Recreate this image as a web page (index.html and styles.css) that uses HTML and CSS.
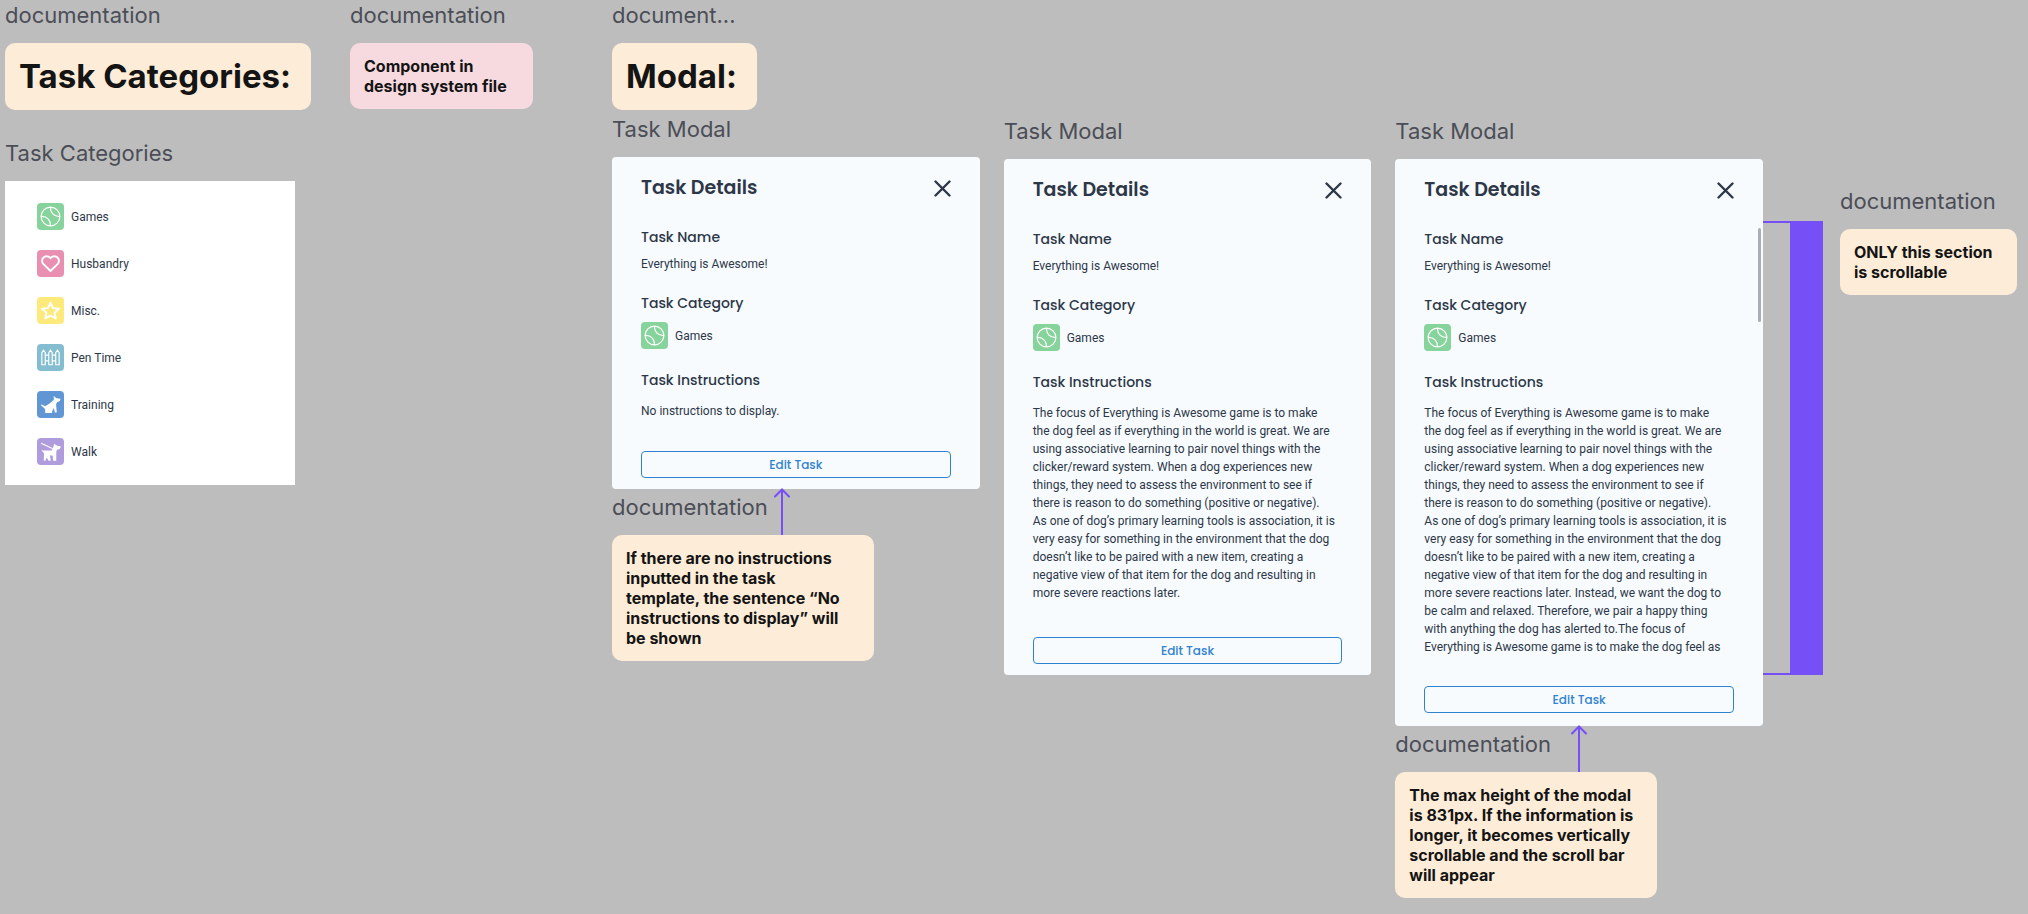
FILE: index.html
```html
<!DOCTYPE html>
<html lang="en">
<head>
  <meta charset="UTF-8">
  <title>Task Modal</title>
  <link rel="stylesheet" href="styles.css">
</head>
<body>

  <svg class="sprite">
    <symbol id="ball" viewBox="0 0 28 28">
      <g fill="none" stroke="#fff" stroke-width="1.3">
        <circle cx="14" cy="14" r="9.7"/>
        <path d="M14 4.3c-.3 5.6 3.200 9.900 9.700 9.700M4.300 14c6.500-.2 10 4.100 9.700 9.700"/>
      </g>
    </symbol>
  </svg>

  <main class="board">
    <section class="categories">
      <p class="label">documentation</p>
      <h1 class="note title">Task Categories:</h1>
      <p class="label spaced">Task Categories</p>
      <ul class="category_list">
        <li class="category">
          <svg class="icon green"><use href="#ball"/></svg>
          <span>Games</span>
        </li>
        <li class="category">
          <svg class="icon pink" viewBox="0 0 28 28">
            <path d="M14 21.800l-7.300-7.200a4.700 4.700 0 0 1 0-6.800 4.700 4.700 0 0 1 6.700 0l.6.700.6-.7a4.700 4.700 0 0 1 6.700 0 4.700 4.700 0 0 1 0 6.800z" fill="none" stroke="#fff" stroke-width="2" stroke-linejoin="round"/>
          </svg>
          <span>Husbandry</span>
        </li>
        <li class="category">
          <svg class="icon yellow" viewBox="0 0 28 28">
            <path d="M14 6l2.600 5.500 6.200.7-4.600 4.100 1.300 6L14 19.300l-5.500 3 1.300-6-4.600-4.100 6.200-.7z" fill="none" stroke="#fff" stroke-width="2" stroke-linejoin="round"/>
          </svg>
          <span>Misc.</span>
        </li>
        <li class="category">
          <svg class="icon teal" viewBox="0 0 28 28">
            <path d="M5 21.500V9l1.800-2.500L8.600 9v12.500zM12.200 21.500V9L14 6.500 15.800 9v12.500zM19.400 21.500V9l1.800-2.500L23 9v12.500zM8.600 11.500h3.600M8.600 17.500h3.600M15.800 11.500h3.600M15.800 17.500h3.600" fill="none" stroke="#fff" stroke-width="1.200"/>
          </svg>
          <span>Pen Time</span>
        </li>
        <li class="category">
          <svg class="icon blue" viewBox="0 0 28 28">
            <path d="M17.300 5.300l3 2.300 4 .4c0 2-1 3.200-3.200 3.200l-1.300 2.500.7 8.500h-2l-1-4.500-1.700 3-.2 2H8.500v-2.500l-.6-2-3.900-3.500.8-.8 3.700 2 4.500-2.900 4.500-3.800z" fill="#fff"/>
          </svg>
          <span>Training</span>
        </li>
        <li class="category">
          <svg class="icon purple" viewBox="0 0 28 28">
            <path d="M4.300 5.500L16.500 11.200" stroke="#fff" stroke-width="1.200"/>
            <path d="M17.800 6l3 2 3.700.5c0 2.300-1.300 3.800-3.500 3.500l-1 2v9.500h-3.200l-.5-5-3-.5 1 5.500h-2.200l-2-3-1.500 3H7l.3-7.500-2.800-3.500L6.300 13h9l1.200-2z" fill="#fff"/>
          </svg>
          <span>Walk</span>
        </li>
      </ul>
    </section>

    <section class="design_system">
      <p class="label">documentation</p>
      <p class="note note_pink">Component in design system file</p>
    </section>

    <section class="modals">
      <p class="label">document...</p>
      <h1 class="note title">Modal:</h1>

      <div class="modal_row">
        <div class="frame">
          <p class="label">Task Modal</p>
          <article class="modal">
            <header class="modal_header">
              <h2>Task Details</h2>
              <button class="close" aria-label="Close">
                <svg viewBox="0 0 17 17"><path d="M1.500 1.500l14 14M15.500 1.500l-14 14"/></svg>
              </button>
            </header>
            <div class="modal_body">
              <h3>Task Name</h3>
              <p>Everything is Awesome!</p>
              <h3>Task Category</h3>
              <div class="category">
                <svg class="icon green"><use href="#ball"/></svg>
                <span>Games</span>
              </div>
              <h3>Task Instructions</h3>
              <p class="instructions">No instructions to display.</p>
            </div>
            <button class="edit">Edit Task</button>
          </article>
          <div class="remark">
            <p class="label">documentation</p>
            <svg class="arrow" viewBox="0 0 16 47"><path d="M8 47V1.500M1 8.500l7-7 7 7"/></svg>
            <p class="note">If there are no instructions<br>inputted in the task<br>template, the sentence “No<br>instructions to display” will<br>be shown</p>
          </div>
        </div>

        <div class="frame frame_low">
          <p class="label">Task Modal</p>
          <article class="modal modal_medium">
            <header class="modal_header">
              <h2>Task Details</h2>
              <button class="close" aria-label="Close">
                <svg viewBox="0 0 17 17"><path d="M1.500 1.500l14 14M15.500 1.500l-14 14"/></svg>
              </button>
            </header>
            <div class="modal_body">
              <h3>Task Name</h3>
              <p>Everything is Awesome!</p>
              <h3>Task Category</h3>
              <div class="category">
                <svg class="icon green"><use href="#ball"/></svg>
                <span>Games</span>
              </div>
              <h3>Task Instructions</h3>
              <p class="instructions">
                The focus of Everything is Awesome game is to make<br>
                the dog feel as if everything in the world is great. We are<br>
                using associative learning to pair novel things with the<br>
                clicker/reward system. When a dog experiences new<br>
                things, they need to assess the environment to see if<br>
                there is reason to do something (positive or negative).<br>
                As one of dog’s primary learning tools is association, it is<br>
                very easy for something in the environment that the dog<br>
                doesn’t like to be paired with a new item, creating a<br>
                negative view of that item for the dog and resulting in<br>
                more severe reactions later.
              </p>
            </div>
            <button class="edit">Edit Task</button>
          </article>
        </div>

        <div class="frame frame_low">
          <p class="label">Task Modal</p>
          <article class="modal modal_max">
            <header class="modal_header">
              <h2>Task Details</h2>
              <button class="close" aria-label="Close">
                <svg viewBox="0 0 17 17"><path d="M1.500 1.500l14 14M15.500 1.500l-14 14"/></svg>
              </button>
            </header>
            <div class="modal_body">
              <h3>Task Name</h3>
              <p>Everything is Awesome!</p>
              <h3>Task Category</h3>
              <div class="category">
                <svg class="icon green"><use href="#ball"/></svg>
                <span>Games</span>
              </div>
              <h3>Task Instructions</h3>
              <p class="instructions">
                The focus of Everything is Awesome game is to make<br>
                the dog feel as if everything in the world is great. We are<br>
                using associative learning to pair novel things with the<br>
                clicker/reward system. When a dog experiences new<br>
                things, they need to assess the environment to see if<br>
                there is reason to do something (positive or negative).<br>
                As one of dog’s primary learning tools is association, it is<br>
                very easy for something in the environment that the dog<br>
                doesn’t like to be paired with a new item, creating a<br>
                negative view of that item for the dog and resulting in<br>
                more severe reactions later. Instead, we want the dog to<br>
                be calm and relaxed. Therefore, we pair a happy thing<br>
                with anything the dog has alerted to.The focus of<br>
                Everything is Awesome game is to make the dog feel as
              </p>
            </div>
            <button class="edit">Edit Task</button>
            <div class="scrollbar"></div>
            <div class="bracket"></div>
          </article>
          <div class="remark remark_max">
            <p class="label">documentation</p>
            <svg class="arrow" viewBox="0 0 16 47"><path d="M8 47V1.500M1 8.500l7-7 7 7"/></svg>
            <p class="note">The max height of the modal is 831px. If the information is longer, it becomes vertically scrollable and the scroll bar will appear</p>
          </div>
        </div>
      </div>
    </section>

    <section class="scroll_note">
      <p class="label">documentation</p>
      <p class="note">ONLY this section is scrollable</p>
    </section>
  </main>

</body>
</html>
```

FILE: styles.css
```css
* {
  box-sizing: border-box;
}

body {
  margin: 0;
  background: #bdbdbd;
  font-family: Inter, sans-serif;
  color: #2d3748;
}

h1, h2, h3, p, ul {
  margin: 0;
  padding: 0;
}

button {
  background: none;
  cursor: pointer;
}

.sprite {
  display: none;
}

.board {
  display: flex;
  align-items: flex-start;
  padding: 1px 11px 16px 5px;
}

.label {
  margin-bottom: 14px;
  font-size: 22px;
  line-height: 28px;
  color: #4b4e57;
  white-space: nowrap;
}

.note {
  padding: 13px 14px;
  border-radius: 10px;
  background: #fdedd8;
  color: #141414;
  font-size: 16px;
  font-weight: 700;
  line-height: 20px;
}

.note_pink {
  background: #f7dae0;
}

.title {
  width: fit-content;
  padding-right: 20px;
  font-size: 33px;
  line-height: 41px;
  white-space: nowrap;
}

/* columns */
.categories {
  width: 306px;
  margin-right: 39px;
}

.design_system {
  width: 183px;
  margin-right: 79px;
}

.modals {
  flex: 1;
}

.scroll_note {
  width: 177px;
  margin-left: 77px;
  padding-top: 186px;
}

/* categories */
.spaced {
  margin-top: 29px;
}

.category_list {
  display: flex;
  flex-direction: column;
  gap: 20px;
  width: 290px;
  padding: 22px 32px 20px;
  background: #fff;
  list-style: none;
}

.category {
  display: flex;
  align-items: center;
  gap: 7px;
  font-family: Roboto, sans-serif;
  font-size: 12px;
}

.icon {
  width: 27px;
  height: 27px;
  border-radius: 4px;
}

.green { background: #86d39b; }
.pink { background: #e98fb2; }
.yellow { background: #fdea7b; }
.teal { background: #85bdd0; }
.blue { background: #6096d4; }
.purple { background: #ae9cdd; }

/* modals */
.modal_row {
  display: grid;
  grid-template-columns: repeat(3, 1fr);
  align-items: start;
  gap: 24px;
  padding-top: 5px;
}

.frame_low {
  padding-top: 2px;
}

.modal {
  position: relative;
  display: flex;
  flex-direction: column;
  min-height: 332px;
  padding: 17px 29px 11px;
  border-radius: 4px;
  background: #f7fbfe;
}

.modal_medium {
  min-height: 516px;
}

.modal_max {
  min-height: 567px;
  padding-bottom: 13px;
}

.modal_header {
  display: flex;
  justify-content: space-between;
  align-items: center;
  margin-bottom: 25px;
}

.modal_header h2 {
  font-family: Poppins, Inter, sans-serif;
  font-size: 19px;
  font-weight: 600;
  line-height: 28px;
}

.close {
  width: 17px;
  height: 17px;
  padding: 0;
  border: none;
}

.close svg {
  display: block;
  fill: none;
  stroke: #2d3748;
  stroke-width: 2.4;
  stroke-linecap: round;
}

.modal_body {
  flex: 1;
}

.modal_body h3 {
  margin-bottom: 8px;
  font-family: Poppins, Inter, sans-serif;
  font-size: 14px;
  font-weight: 500;
  line-height: 20px;
}

.modal_body h3:not(:first-child) {
  margin-top: 20px;
}

.modal_body p {
  font-family: Roboto, sans-serif;
  font-size: 12px;
  line-height: 18px;
}

.modal_body .category {
  padding: 1px 0;
}

.modal_body .instructions {
  padding-top: 4px;
  white-space: nowrap;
}

.edit {
  height: 27px;
  border: 1px solid #3182ce;
  border-radius: 4px;
  color: #3182ce;
  font-family: Poppins, Inter, sans-serif;
  font-size: 12px;
  font-weight: 500;
}

.scrollbar {
  position: absolute;
  top: 69px;
  right: 2px;
  width: 3px;
  height: 94px;
  border-radius: 2px;
  background: #a9aeb6;
}

/* marks the scrollable part of the modal */
.bracket {
  position: absolute;
  top: 62px;
  bottom: 51px;
  left: 100%;
  width: 60px;
  border: solid #7650f6;
  border-width: 2px 33px 2px 0;
}

.remark {
  position: relative;
  width: 262px;
  padding-top: 4px;
}

.arrow {
  position: absolute;
  top: -1px;
  left: 162px;
  width: 16px;
  height: 47px;
  fill: none;
  stroke: #7650f6;
  stroke-width: 2;
  stroke-linecap: round;
}

.remark_max .arrow {
  left: 176px;
}
```
